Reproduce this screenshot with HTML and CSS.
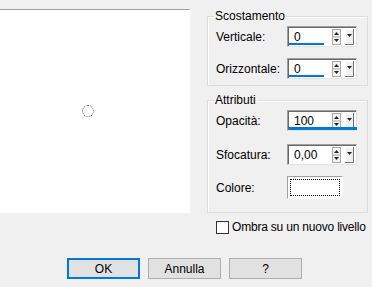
FILE: index.html
```html
<!DOCTYPE html>
<html lang="it">
<head>
    <meta charset="UTF-8">
    <title>Ombra</title>
    <link rel="stylesheet" href="styles.css">
</head>
<body>
    <div class="dialog">
        <div class="main">
            <div class="preview">
                <span class="cursor"></span>
            </div>

            <div class="side">
                <fieldset class="group group-offset">
                    <legend>Scostamento</legend>
                    <div class="row">
                        <label>Verticale:</label>
                        <div class="spin">
                            <span class="value">0</span>
                            <span class="bar" style="width: 35px"></span>
                            <svg class="arrows" width="9" height="16" viewBox="0 0 9 16">
                                <rect x="0.5" y="0.5" width="8" height="15" fill="#f4f4f4" stroke="#a8a8a8"/>
                                <line x1="1" y1="8" x2="8" y2="8" stroke="#a8a8a8"/>
                                <path d="M2 6 L4.5 3 L7 6 Z" fill="#222"/>
                                <path d="M2 10 L4.5 13 L7 10 Z" fill="#222"/>
                            </svg>
                            <svg class="drop" width="9" height="16" viewBox="0 0 9 16">
                                <rect x="0.5" y="0.5" width="8" height="15" fill="#f0f0f0" stroke="#fff"/>
                                <path d="M8.5 0 V15.5 H0" fill="none" stroke="#707070"/>
                                <path d="M2 5 L4.5 8 L7 5 Z" fill="#222"/>
                            </svg>
                        </div>
                    </div>
                    <div class="row">
                        <label>Orizzontale:</label>
                        <div class="spin">
                            <span class="value">0</span>
                            <span class="bar" style="width: 35px"></span>
                            <svg class="arrows" width="9" height="16" viewBox="0 0 9 16">
                                <rect x="0.5" y="0.5" width="8" height="15" fill="#f4f4f4" stroke="#a8a8a8"/>
                                <line x1="1" y1="8" x2="8" y2="8" stroke="#a8a8a8"/>
                                <path d="M2 6 L4.5 3 L7 6 Z" fill="#222"/>
                                <path d="M2 10 L4.5 13 L7 10 Z" fill="#222"/>
                            </svg>
                            <svg class="drop" width="9" height="16" viewBox="0 0 9 16">
                                <rect x="0.5" y="0.5" width="8" height="15" fill="#f0f0f0" stroke="#fff"/>
                                <path d="M8.5 0 V15.5 H0" fill="none" stroke="#707070"/>
                                <path d="M2 5 L4.5 8 L7 5 Z" fill="#222"/>
                            </svg>
                        </div>
                    </div>
                </fieldset>

                <fieldset class="group group-attr">
                    <legend>Attributi</legend>
                    <div class="row">
                        <label>Opacità:</label>
                        <div class="spin">
                            <span class="value">100</span>
                            <span class="bar full" style="width: 68px"></span>
                            <svg class="arrows" width="9" height="16" viewBox="0 0 9 16">
                                <rect x="0.5" y="0.5" width="8" height="15" fill="#f4f4f4" stroke="#a8a8a8"/>
                                <line x1="1" y1="8" x2="8" y2="8" stroke="#a8a8a8"/>
                                <path d="M2 6 L4.5 3 L7 6 Z" fill="#222"/>
                                <path d="M2 10 L4.5 13 L7 10 Z" fill="#222"/>
                            </svg>
                            <svg class="drop" width="9" height="16" viewBox="0 0 9 16">
                                <rect x="0.5" y="0.5" width="8" height="15" fill="#f0f0f0" stroke="#fff"/>
                                <path d="M8.5 0 V15.5 H0" fill="none" stroke="#707070"/>
                                <path d="M2 5 L4.5 8 L7 5 Z" fill="#222"/>
                            </svg>
                        </div>
                    </div>
                    <div class="row row-blur">
                        <label>Sfocatura:</label>
                        <div class="spin">
                            <span class="value">0,00</span>
                            <svg class="arrows" width="9" height="16" viewBox="0 0 9 16">
                                <rect x="0.5" y="0.5" width="8" height="15" fill="#f4f4f4" stroke="#a8a8a8"/>
                                <line x1="1" y1="8" x2="8" y2="8" stroke="#a8a8a8"/>
                                <path d="M2 6 L4.5 3 L7 6 Z" fill="#222"/>
                                <path d="M2 10 L4.5 13 L7 10 Z" fill="#222"/>
                            </svg>
                            <svg class="drop" width="9" height="16" viewBox="0 0 9 16">
                                <rect x="0.5" y="0.5" width="8" height="15" fill="#f0f0f0" stroke="#fff"/>
                                <path d="M8.5 0 V15.5 H0" fill="none" stroke="#707070"/>
                                <path d="M2 5 L4.5 8 L7 5 Z" fill="#222"/>
                            </svg>
                        </div>
                    </div>
                    <div class="row row-color">
                        <label>Colore:</label>
                        <div class="swatch"><span class="focus"></span></div>
                    </div>
                </fieldset>

                <label class="check">
                    <span class="box"></span>
                    Ombra su un nuovo livello
                </label>
            </div>
        </div>

        <div class="buttons">
            <button class="default">OK</button>
            <button>Annulla</button>
            <button>?</button>
        </div>
    </div>
</body>
</html>
```

FILE: styles.css
```css
body {
    margin: 0;
    background: #f0f0f0;
    font-family: "Liberation Sans", Arial, sans-serif;
    font-size: 12px;
    color: #000;
}
.dialog {
    width: 372px;
    height: 287px;
    padding-top: 9px;
    box-sizing: border-box;
    overflow: hidden;
}
.main {
    display: flex;
    align-items: flex-start;
}
.preview {
    position: relative;
    width: 189px;
    height: 203px;
    background: #fff;
    border-top: 1px solid #a0a0a0;
    border-right: 2px solid #f9f9f9;
}
.cursor {
    position: absolute;
    left: 82px;
    top: 95px;
    width: 10px;
    height: 10px;
    border: 1px dotted #555;
    border-radius: 50%;
}
.side {
    margin-left: 16px;
    width: 161px;
}
.group {
    margin: 0;
    padding: 0 0 0 8px;
    border: 1px solid #dcdcdc;
    box-shadow: inset 1px 1px 0 #fff;
}
.group legend {
    padding: 0 1px;
    margin-left: -2px;
    line-height: 14px;
}
.group-offset { padding-bottom: 6px; }
.group-attr { margin-top: 7px; padding-bottom: 13px; }
.row {
    display: flex;
    align-items: center;
    height: 21px;
    margin-top: 3px;
}
.row + .row { margin-top: 11px; }
.group-attr .row-blur { margin-top: 13px; }
.group-attr .row-color { margin-top: 11px; height: 23px; }
.row label {
    width: 71px;
}
.spin {
    position: relative;
    display: flex;
    align-items: center;
    width: 70px;
    height: 21px;
    box-sizing: border-box;
    background: #fff;
    border: 1px solid;
    border-color: #a0a0a0 #e3e3e3 #e3e3e3 #a0a0a0;
    box-shadow: inset 1px 1px 0 #696969;
}
.spin .value {
    flex: 1;
    padding-left: 6px;
    padding-top: 1px;
}
.spin .bar {
    position: absolute;
    left: 1px;
    bottom: 1px;
    height: 2px;
    background: #0078d7;
}
.spin .bar.full { height: 3px; bottom: 0; }
.spin .arrows { margin-right: 4px; }
.spin .drop { margin-right: 2px; }
.swatch {
    width: 56px;
    height: 23px;
    box-sizing: border-box;
    padding: 2px;
    background: #fff;
    border: 1px solid;
    border-color: #a0a0a0 #fff #fff #a0a0a0;
}
.swatch .focus {
    display: block;
    height: 100%;
    border: 1px dotted #000;
    box-sizing: border-box;
}
.check {
    display: flex;
    align-items: center;
    gap: 3px;
    margin: 7px 0 0 9px;
    white-space: nowrap;
    letter-spacing: -0.2px;
}
.check .box {
    flex: none;
    width: 13px;
    height: 13px;
    box-sizing: border-box;
    border: 1px solid #333;
    background: #fff;
}
.buttons {
    display: flex;
    gap: 8px;
    margin: 24px 0 0 67px;
}
button {
    width: 73px;
    height: 21px;
    padding: 0;
    font-family: inherit;
    font-size: 12px;
    color: #000;
    background: #e1e1e1;
    border: 1px solid #adadad;
}
button.default {
    border: 2px solid #0078d7;
}
```
